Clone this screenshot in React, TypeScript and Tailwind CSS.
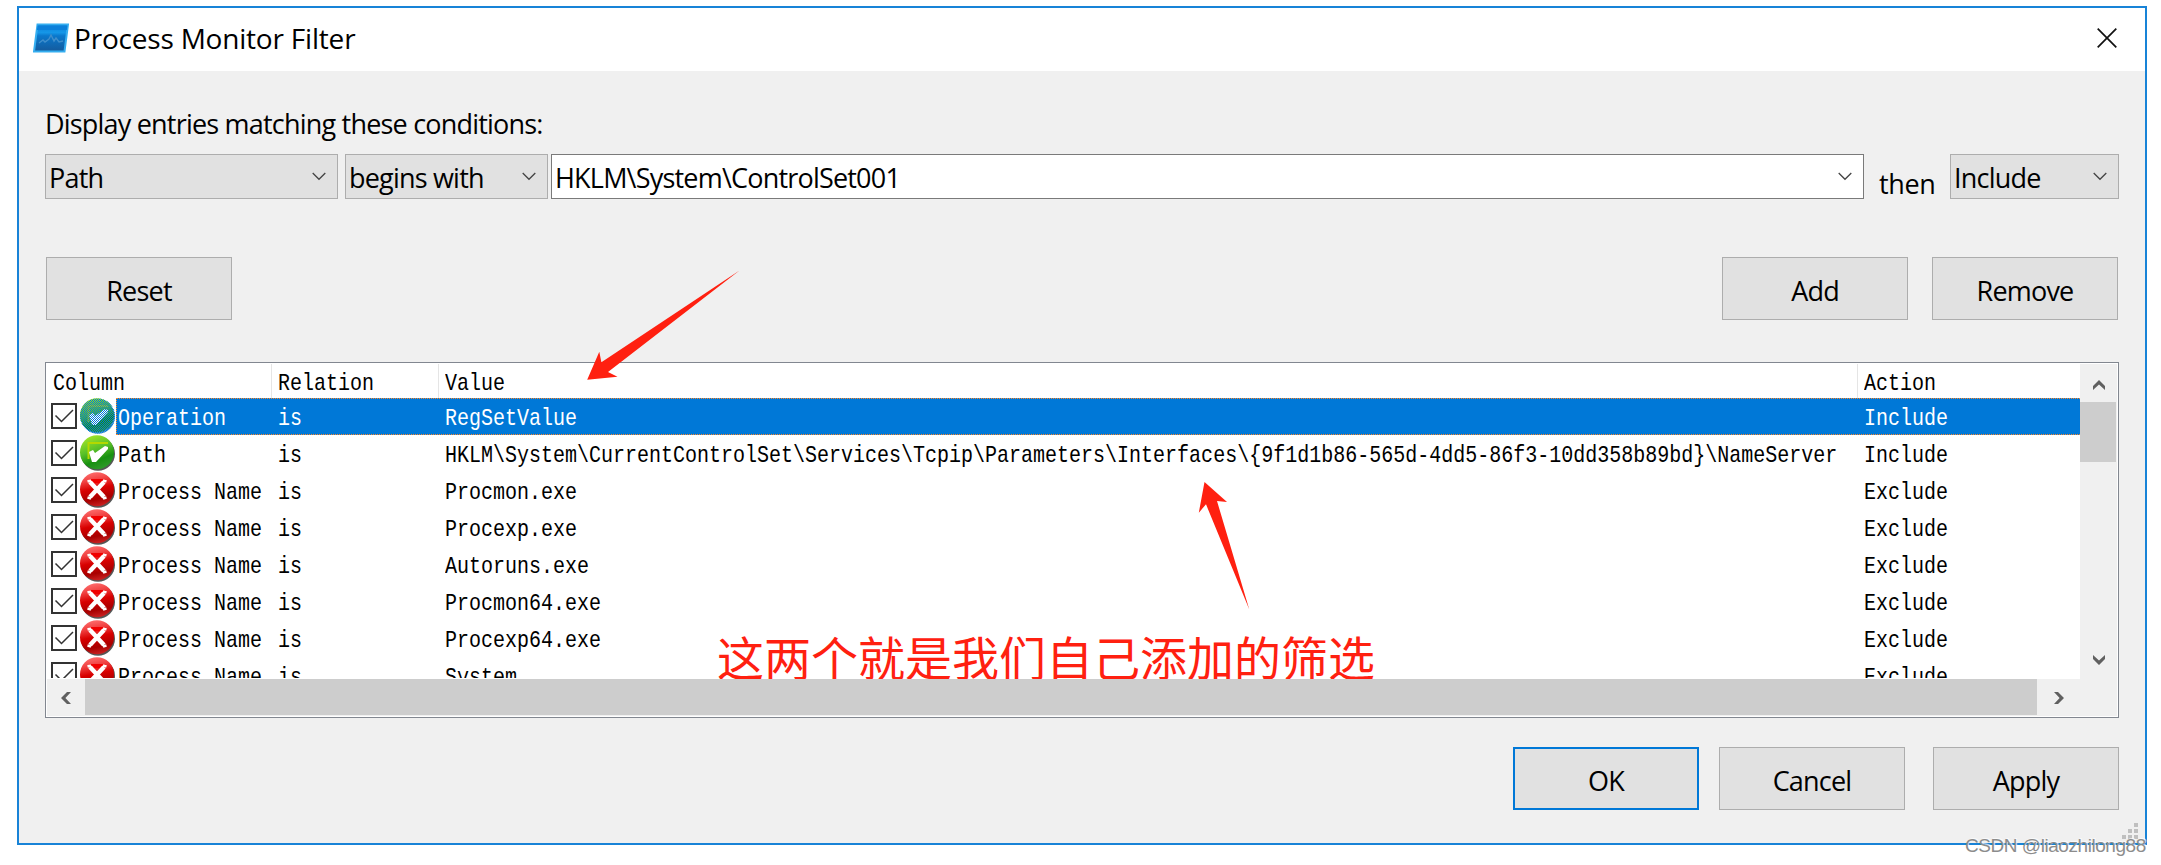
import { clsx } from 'clsx';

type Action = 'Include' | 'Exclude';

interface FilterRule {
  column: string;
  value: string;
  action: Action;
}

const RULES: FilterRule[] = [
  { column: 'Operation', value: 'RegSetValue', action: 'Include' },
  {
    column: 'Path',
    value:
      'HKLM\\System\\CurrentControlSet\\Services\\Tcpip\\Parameters\\Interfaces\\{9f1d1b86-565d-4dd5-86f3-10dd358b89bd}\\NameServer',
    action: 'Include',
  },
  { column: 'Process Name', value: 'Procmon.exe', action: 'Exclude' },
  { column: 'Process Name', value: 'Procexp.exe', action: 'Exclude' },
  { column: 'Process Name', value: 'Autoruns.exe', action: 'Exclude' },
  { column: 'Process Name', value: 'Procmon64.exe', action: 'Exclude' },
  { column: 'Process Name', value: 'Procexp64.exe', action: 'Exclude' },
  { column: 'Process Name', value: 'System', action: 'Exclude' },
];

const AppIcon = () => (
  <svg width="36" height="30" viewBox="0 0 36 30" className="shrink-0">
    <defs>
      <linearGradient id="app-body" x1="0" y1="0" x2="0" y2="1">
        <stop offset="0" stopColor="#0a7fd8" />
        <stop offset="0.3" stopColor="#1597e8" />
        <stop offset="0.42" stopColor="#0a78cc" />
        <stop offset="1" stopColor="#155a9c" />
      </linearGradient>
    </defs>
    <path d="M4.5 1.5 H35 L31.5 28.5 H1 Z" fill="url(#app-body)" stroke="#35aef0" strokeWidth="2" />
    <path d="M4.5 2.5 H34.5 L33.8 7 H3.9 Z" fill="#0b80da" />
    <path
      d="M6 20 L10 17 L12 19 L16 16 L18 12 L21 18 L23 15 L26 19 L30 18"
      fill="none"
      stroke="#3f8ecb"
      strokeWidth="1.4"
    />
  </svg>
);

const Chevron = ({ className }: { className?: string }) => (
  <svg width="14" height="9" viewBox="0 0 14 9" className={clsx('shrink-0', className)}>
    <path d="M0.7 1 L7 7.3 L13.3 1" fill="none" stroke="#444" strokeWidth="1.3" />
  </svg>
);

const ScrollArrow = ({ className }: { className?: string }) => (
  <svg width="12" height="10" viewBox="0 0 12 10" className={className}>
    <path d="M0 6 L6 0 L12 6 V10 L6 4.4 L0 10 Z" fill="#606060" />
  </svg>
);

const Checkbox = () => (
  <span className="mb-px ml-1 flex size-[26px] shrink-0 border-2 border-[#333] bg-white">
    <svg width="22" height="22" viewBox="0 0 22 22">
      <path d="M2.5 10.5 L8.5 16.5 L20 5" fill="none" stroke="#333" strokeWidth="1.5" />
    </svg>
  </span>
);

const StatusIcon = ({ action, selected }: { action: Action; selected?: boolean }) => (
  <svg width="36" height="37" viewBox="0 0 36 37" className="ml-[3px] shrink-0">
    <defs>
      <linearGradient id="include" x1="0.2" y1="0" x2="0.6" y2="1">
        <stop offset="0" stopColor="#a8e828" />
        <stop offset="0.45" stopColor="#58c028" />
        <stop offset="0.75" stopColor="#189010" />
        <stop offset="1" stopColor="#2f9a2a" />
      </linearGradient>
      <linearGradient id="exclude" x1="0.3" y1="0" x2="0.5" y2="1">
        <stop offset="0" stopColor="#ff7070" />
        <stop offset="0.25" stopColor="#f04040" />
        <stop offset="0.5" stopColor="#d80000" />
        <stop offset="0.8" stopColor="#a80000" />
        <stop offset="1" stopColor="#c82020" />
      </linearGradient>
      <pattern id="dither" width="2" height="2" patternUnits="userSpaceOnUse">
        <rect width="1" height="1" fill="#0078d7" />
        <rect x="1" y="1" width="1" height="1" fill="#0078d7" />
      </pattern>
    </defs>
    <circle cx="18" cy="18.8" r="17" fill={selected ? '#4a9ad0' : '#555'} />
    <circle cx="17" cy="17.2" r="17" fill={action === 'Include' ? 'url(#include)' : 'url(#exclude)'} />
    {action === 'Include' ? (
      <>
        <path d="M8.5 24 V8 H28" fill="none" stroke="#b4d800" strokeWidth="2" />
        <path d="M9 17 L13 15 L15 18 L25 11 L28 12 L28 14 L16 27 L12 27 Z" fill="#fff" />
      </>
    ) : (
      <>
        <path d="M9 7 H26 L22 12 L17 11 L12 12 Z" fill="#f00000" />
        <path d="M10 10 L24 25 M24 10 L10 25" stroke="#fff" strokeWidth="4.4" />
        <path d="M7.5 9.5 L11 8.5 M23 8.5 L26.5 9.5 M7.5 25.5 L11 26.5 M23 26.5 L26.5 25.5" stroke="#fff" strokeWidth="2.4" />
      </>
    )}
    {selected && <circle cx="17.5" cy="18" r="17.6" fill="url(#dither)" />}
  </svg>
);

const Select = ({ label, className }: { label: string; className?: string }) => (
  <div
    className={clsx(
      'flex h-[45px] shrink-0 items-center justify-between border pr-[11px] pl-[3px]',
      className,
    )}
  >
    <span className="pt-0.5 leading-none whitespace-pre">{label}</span>
    <Chevron />
  </div>
);

const Button = ({ label, primary }: { label: string; primary?: boolean }) => (
  <button
    className={clsx(
      'flex h-[63px] w-[186px] items-center justify-center bg-[#e1e1e1] pt-1 leading-none tracking-[-0.8px]',
      primary ? 'border-2 border-[#0078d7]' : 'border border-[#adadad]',
    )}
  >
    {label}
  </button>
);

// List text is a tall, narrow 12px-per-cell face
const Cell = ({ children, className }: { children: string; className: string }) => (
  <span className={clsx('shrink-0 origin-bottom scale-y-[1.2] whitespace-pre', className)}>{children}</span>
);

const RuleRow = ({ rule, selected }: { rule: FilterRule; selected?: boolean }) => (
  <div className="flex h-[37px] shrink-0 items-center">
    <Checkbox />
    <StatusIcon action={rule.action} selected={selected} />
    <div
      className={clsx(
        'flex h-full flex-1 items-center pt-2',
        selected && 'border-y border-l border-dotted border-[#ff8728] bg-[#0078d7] text-white',
      )}
    >
      <Cell className={selected ? 'ml-px w-[160px]' : 'ml-0.5 w-[160px]'}>{rule.column}</Cell>
      <Cell className="w-[167px]">is</Cell>
      <Cell className="w-[1419px]">{rule.value}</Cell>
      <Cell className="">{rule.action}</Cell>
    </div>
  </div>
);

const App = () => {
  return (
    <div className="relative h-[865px] w-[2161px] overflow-hidden bg-white pt-1.5 pl-[17px] font-['Open_Sans',sans-serif] text-[27px] text-black">
      <div className="flex h-[839px] w-[2130px] flex-col border-2 border-[#1883d7] bg-[#f0f0f0]">
        {/* TITLE BAR */}
        <div className="flex h-[63px] shrink-0 items-center bg-white pr-[28px] pb-[3px] pl-3.5">
          <AppIcon />
          <span className="ml-[5px] flex-1 text-[28px] leading-none tracking-[-0.2px]">Process Monitor Filter</span>
          <svg width="20" height="20" viewBox="0 0 20 20">
            <path d="M0.7 0.7 L19.3 19.3 M19.3 0.7 L0.7 19.3" stroke="#111" strokeWidth="1.7" />
          </svg>
        </div>

        <div className="flex flex-1 flex-col pr-[26px] pl-[26px]">
          {/* CONDITION */}
          <p className="mt-[39px] leading-none tracking-[-0.8px]">Display entries matching these conditions:</p>
          <div className="mt-[17px] flex items-center tracking-[-0.8px]">
            <Select label="Path" className="w-[293px] border-[#adadad] bg-[#e1e1e1]" />
            <Select label="begins with" className="ml-[7px] w-[203px] border-[#adadad] bg-[#e1e1e1]" />
            <Select label="HKLM\System\ControlSet001" className="ml-[3px] w-[1313px] border-[#7a7a7a] bg-white" />
            <span className="mt-3.5 ml-[15px] w-[71px] leading-none tracking-[-0.4px]">then</span>
            <Select label="Include" className="w-[169px] border-[#adadad] bg-[#e1e1e1]" />
          </div>

          <div className="mt-[58px] flex gap-6 pr-px pl-px">
            <Button label="Reset" />
            <div className="flex-1" />
            <Button label="Add" />
            <Button label="Remove" />
          </div>

          {/* RULE LIST */}
          <div className="mt-[42px] flex h-[356px] flex-col border border-[#828790] bg-white p-px">
            <div className="flex h-[315px] shrink-0">
              <div className="flex h-[314px] w-[2033px] flex-col overflow-hidden bg-white font-['Liberation_Mono',monospace] text-[20px] leading-none">
                <div className="flex h-[34px] shrink-0 items-center pt-2.5">
                  <Cell className="ml-1.5 w-[225px]">Column</Cell>
                  <Cell className="w-[167px]">Relation</Cell>
                  <Cell className="w-[1419px]">Value</Cell>
                  <Cell className="">Action</Cell>
                </div>
                {RULES.map((rule, index) => (
                  <RuleRow key={index} rule={rule} selected={index === 0} />
                ))}
              </div>
              <div className="flex w-[37px] flex-col items-center bg-[#f0f0f0]">
                <ScrollArrow className="mt-4" />
                <div className="mt-3 h-[60px] w-9 self-start bg-[#cdcdcd]" />
                <ScrollArrow className="mt-auto mb-3.5 rotate-180" />
              </div>
            </div>
            <div className="flex h-[37px] bg-[#f0f0f0]">
              <div className="flex w-[38px] items-center justify-center">
                <ScrollArrow className="-rotate-90" />
              </div>
              <div className="h-9 w-[1952px] bg-[#cdcdcd]" />
              <div className="flex w-[43px] items-center justify-center">
                <ScrollArrow className="rotate-90" />
              </div>
            </div>
          </div>

          <div className="mt-[29px] flex justify-end">
            <Button label="OK" primary />
            <div className="w-5" />
            <Button label="Cancel" />
            <div className="w-7" />
            <Button label="Apply" />
          </div>
        </div>
      </div>

      {/* COLUMN DIVIDERS */}
      <div className="absolute top-[364px] left-[271px] h-[34px] w-px bg-[#e5e5e5]" />
      <div className="absolute top-[364px] left-[438px] h-[34px] w-px bg-[#e5e5e5]" />
      <div className="absolute top-[364px] left-[1857px] h-[34px] w-px bg-[#e5e5e5]" />

      {/* SIZE GRIP */}
      <svg width="16" height="16" viewBox="0 0 16 16" className="absolute top-[823px] left-[2122px]">
        <path d="M12 0h4v4h-4z M6 6h4v4h-4z M12 6h4v4h-4z M0 12h4v4h-4z M6 12h4v4h-4z M12 12h4v4h-4z" fill="#bfbfbf" />
      </svg>

      {/* ANNOTATIONS */}
      <svg width="2161" height="865" viewBox="0 0 2161 865" className="absolute top-0 left-0">
        <path d="M587.2 379.7 L599.3 351.7 L601.4 362.3 L739.5 270.5 L608 372 L617.5 376.7 Z" fill="#ff2010" />
        <path d="M1204.5 482 L1227 502 L1217 501 L1249.3 609.5 L1206 504.3 L1198.8 512.7 Z" fill="#ff2010" />
      </svg>
      <p className="absolute top-[630px] left-[717px] h-[49px] overflow-hidden font-['Noto_Sans_CJK_SC',sans-serif] text-[47px] leading-[51px] whitespace-nowrap text-[#ff2010]">
        这两个就是我们自己添加的筛选
      </p>

      {/* WATERMARK */}
      <span className="absolute top-[835px] left-[1965px] font-['Liberation_Sans',sans-serif] text-[19px] leading-[22px] tracking-[-0.45px] whitespace-nowrap text-[#8c8c8c] [text-shadow:1px_-1px_0_rgba(255,255,255,0.7)]">
        CSDN @liaozhilong88
      </span>
    </div>
  );
};

export default App;
